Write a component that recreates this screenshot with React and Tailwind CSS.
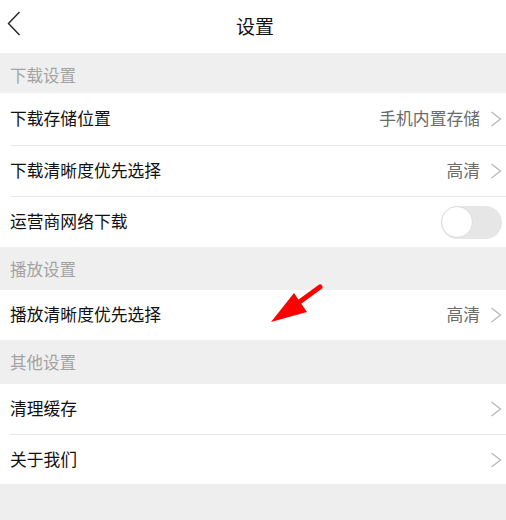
import React from "react";

const FONT = { fontFamily: '"Noto Sans CJK SC", "Noto Sans", sans-serif' };

function Chevron() {
  return (
    <svg width="12" height="16" viewBox="0 0 12 16" className="ml-[10px] shrink-0">
      <path d="M1.5 1 L10.5 8 L1.5 15" fill="none" stroke="#b5b5b5" strokeWidth="1.2" />
    </svg>
  );
}

function Section({ title, className }) {
  return (
    <div className={`flex items-center bg-[#efefef] px-[10px] text-[16.5px] text-[#a3a3a3] ${className}`}>
      {title}
    </div>
  );
}

function Row({ label, value, toggle, divider, className = "h-[50px]" }) {
  return (
    <div className="bg-white">
      {divider && <div className="ml-[10px] h-px bg-[#e8e8e8]" />}
      <div className={`flex items-center pl-[10px] pr-[4px] ${className}`}>
        <span className="flex-1 text-[16.8px] text-[#111]">{label}</span>
        {toggle ? (
          <div className="flex h-[33px] w-[61px] items-center rounded-full bg-[#e6e6e6]">
            <div className="h-[32px] w-[32px] rounded-full border border-[#dcdcdc] bg-white" />
          </div>
        ) : (
          <>
            {value && <span className="text-[16.8px] text-[#6b6b6b]">{value}</span>}
            <Chevron />
          </>
        )}
      </div>
    </div>
  );
}

export default function App() {
  return (
    <div className="relative flex h-[520px] w-[506px] flex-col bg-[#eeeeee]" style={FONT}>
      <div className="relative flex h-[53px] items-center justify-center bg-white">
        <svg width="14" height="25" viewBox="0 0 14 25" className="absolute left-[7px] top-[11px]">
          <path d="M12.5 1 L1.5 12.5 L12.5 24" fill="none" stroke="#222" strokeWidth="1.4" />
        </svg>
        <span className="ml-[4px] text-[19px] text-[#111]">设置</span>
      </div>

      <Section title="下载设置" className="h-[40px] pt-[4px]" />
      <Row label="下载存储位置" value="手机内置存储" className="h-[52px]" />
      <Row label="下载清晰度优先选择" value="高清" divider className="h-[50px]" />
      <Row label="运营商网络下载" toggle divider className="h-[50px]" />

      <Section title="播放设置" className="h-[43px] pt-[1px]" />
      <Row label="播放清晰度优先选择" value="高清" />

      <Section title="其他设置" className="h-[44px]" />
      <Row label="清理缓存" />
      <Row label="关于我们" divider className="h-[49px]" />

      <svg width="506" height="520" className="pointer-events-none absolute left-0 top-0">
        <line x1="320" y1="287" x2="298" y2="303" stroke="#ff0000" strokeWidth="5" strokeLinecap="round" />
        <polygon points="271,322 294,293 307,312" fill="#ff0000" />
      </svg>
    </div>
  );
}
